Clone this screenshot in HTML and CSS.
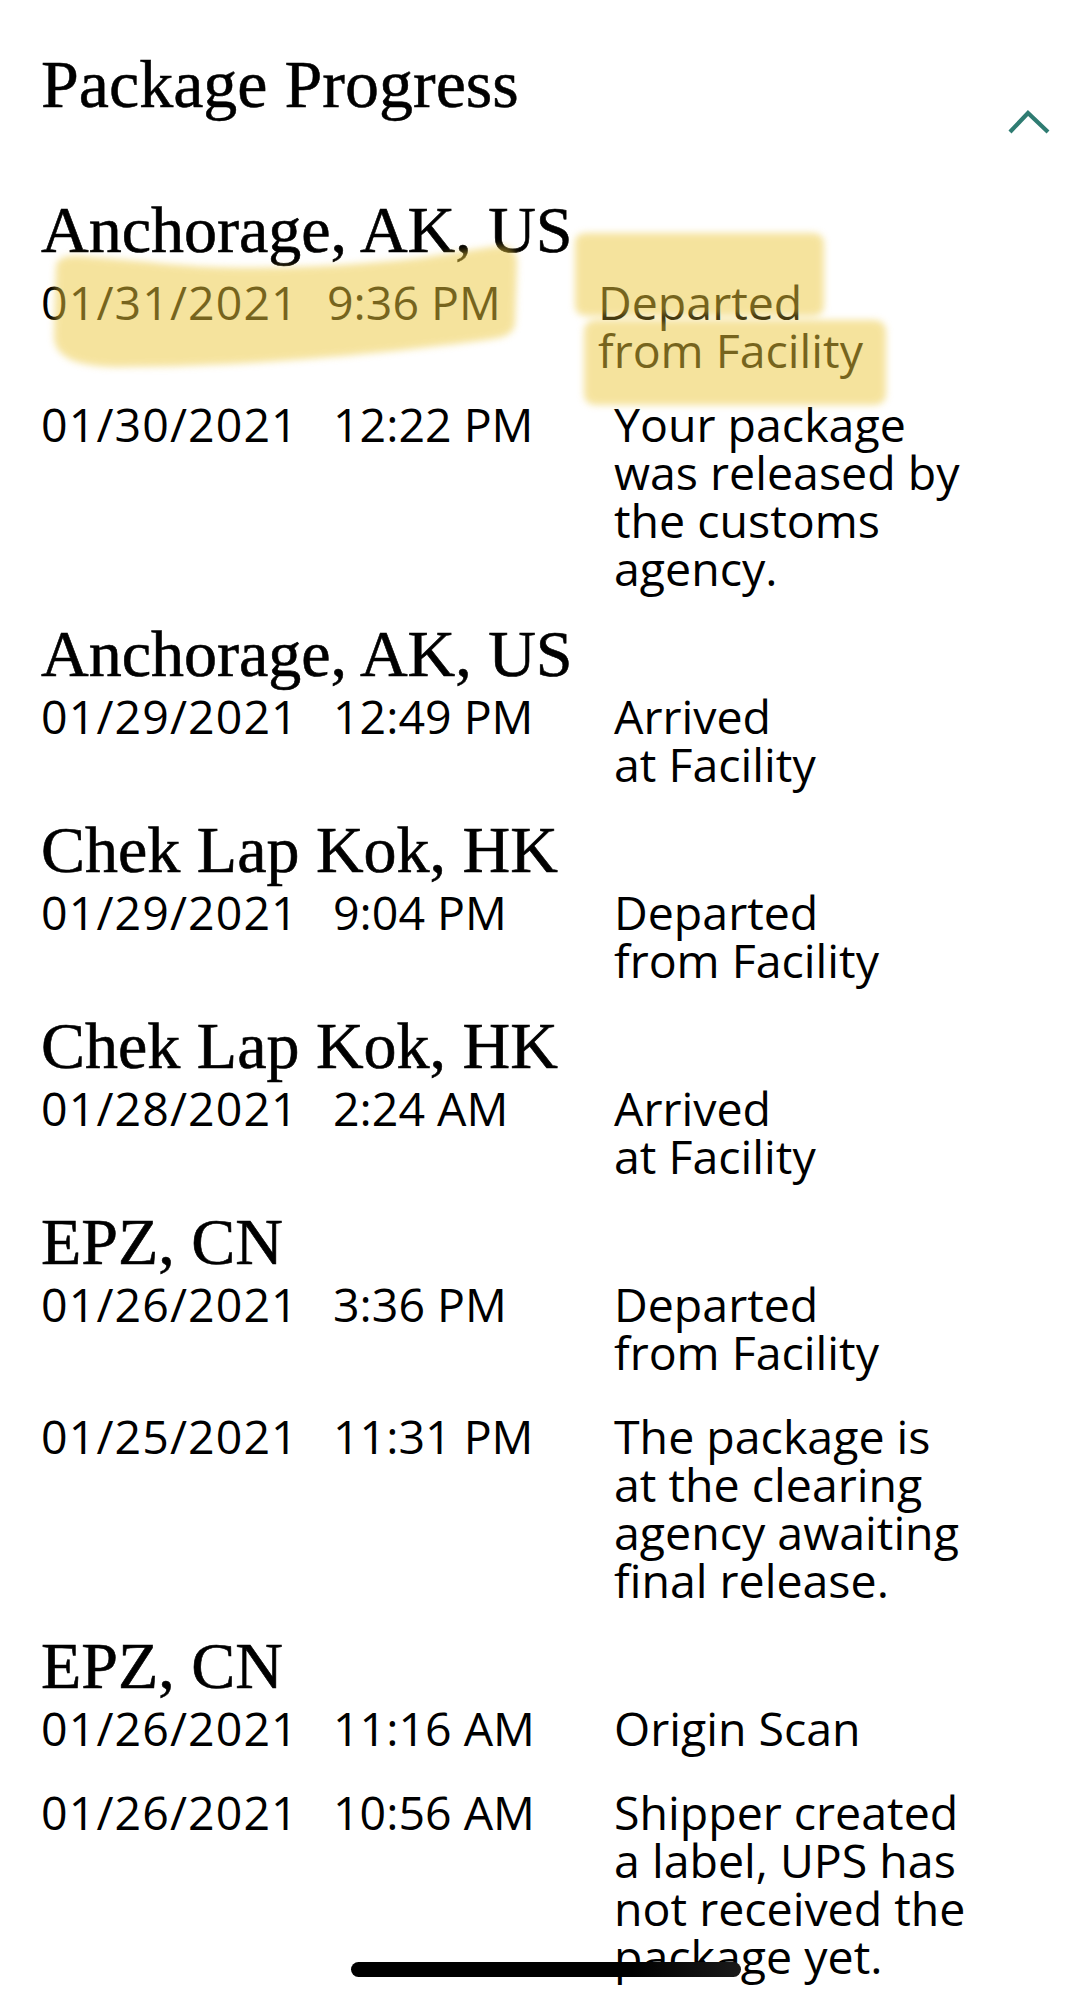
FILE: index.html
```html
<!DOCTYPE html>
<html lang="en">
<head>
<meta charset="utf-8">
<title>Package Progress</title>
<link rel="stylesheet" href="styles.css">
</head>
<body>
<main class="page">
  <header class="head">
    <h1 class="title">Package Progress</h1>
    <button class="toggle" aria-label="Collapse">
      <svg class="chevron" width="46" height="28" viewBox="0 0 46 28"><polyline points="4,24 22,5 42,24" fill="none" stroke="#2f7c72" stroke-width="4.2" stroke-linecap="butt" stroke-linejoin="miter"/></svg>
    </button>
  </header>

  <section class="progress">
    <div class="group">
      <h2 class="loc">Anchorage, AK, US</h2>
      <div class="events">
        <div class="event event-first">
          <span class="date">01/31/2021</span><span class="time">9:36 PM</span><span class="desc">Departed<br>from Facility</span>
        </div>
        <div class="event">
          <span class="date">01/30/2021</span><span class="time">12:22 PM</span><span class="desc">Your package<br>was released by<br>the customs<br>agency.</span>
        </div>
      </div>
    </div>

    <div class="group">
      <h2 class="loc">Anchorage, AK, US</h2>
      <div class="events">
        <div class="event">
          <span class="date">01/29/2021</span><span class="time">12:49 PM</span><span class="desc">Arrived<br>at Facility</span>
        </div>
      </div>
    </div>

    <div class="group">
      <h2 class="loc">Chek Lap Kok, HK</h2>
      <div class="events">
        <div class="event">
          <span class="date">01/29/2021</span><span class="time">9:04 PM</span><span class="desc">Departed<br>from Facility</span>
        </div>
      </div>
    </div>

    <div class="group">
      <h2 class="loc">Chek Lap Kok, HK</h2>
      <div class="events">
        <div class="event">
          <span class="date">01/28/2021</span><span class="time">2:24 AM</span><span class="desc">Arrived<br>at Facility</span>
        </div>
      </div>
    </div>

    <div class="group">
      <h2 class="loc">EPZ, CN</h2>
      <div class="events">
        <div class="event">
          <span class="date">01/26/2021</span><span class="time">3:36 PM</span><span class="desc">Departed<br>from Facility</span>
        </div>
        <div class="event">
          <span class="date">01/25/2021</span><span class="time">11:31 PM</span><span class="desc">The package is<br>at the clearing<br>agency awaiting<br>final release.</span>
        </div>
      </div>
    </div>

    <div class="group">
      <h2 class="loc">EPZ, CN</h2>
      <div class="events">
        <div class="event">
          <span class="date">01/26/2021</span><span class="time">11:16 AM</span><span class="desc">Origin Scan</span>
        </div>
        <div class="event">
          <span class="date">01/26/2021</span><span class="time">10:56 AM</span><span class="desc">Shipper created<br>a label, UPS has<br>not received the<br>package yet.</span>
        </div>
      </div>
    </div>
  </section>

  <svg class="marker" width="1090" height="420" viewBox="0 0 1090 420" aria-hidden="true">
    <defs>
      <filter id="soft" x="-10%" y="-20%" width="120%" height="140%">
        <feGaussianBlur stdDeviation="3.5"/>
      </filter>
    </defs>
    <g fill="rgb(236,200,62)" opacity="0.5" filter="url(#soft)">
      <path d="M56 268 C56 259 64 255 80 256 L150 262 C230 272 330 268 420 258 L498 246 C510 245 517 251 517 262 L515 322 C515 332 507 337 492 339 C400 352 250 367 120 367 C76 367 54 357 54 336 Z"/>
      <path d="M575 242 C575 236 580 233 588 233 L812 233 C820 233 824 237 824 244 L824 306 C824 312 820 316 812 316 L588 316 C580 316 575 312 575 306 Z"/>
      <path d="M584 332 C584 324 589 320 597 320 L873 320 C881 320 886 324 886 332 L886 394 C886 401 881 405 873 405 L597 405 C589 405 584 401 584 394 Z"/>
    </g>
  </svg>

  <div class="home-indicator"></div>
</main>
</body>
</html>
```

FILE: styles.css
```css
* {
  box-sizing: border-box;
}

html,
body {
  margin: 0;
  padding: 0;
  background: #ffffff;
}

.page {
  position: relative;
  width: 1090px;
  height: 2000px;
  overflow: hidden;
  background: #ffffff;
  color: #000000;
}

.head {
  display: flex;
  justify-content: space-between;
  align-items: flex-start;
  padding: 46px 38px 0 41px;
}

.title {
  margin: 0;
  font-family: "Liberation Serif", "Times New Roman", serif;
  font-weight: 400;
  font-size: 68px;
  line-height: 76px;
  color: #000000;
  -webkit-text-stroke: 0.5px #000000;
}

.toggle {
  margin: 62px 0 0 0;
  padding: 0;
  border: 0;
  background: none;
  line-height: 0;
  font-size: 0;
}

.chevron {
  display: block;
}

.progress {
  display: flex;
  flex-direction: column;
  gap: 26px;
  margin-top: 58px;
  padding-left: 41px;
}

.loc {
  margin: 0;
  font-family: "Liberation Serif", "Times New Roman", serif;
  font-weight: 400;
  font-size: 66px;
  line-height: 72px;
  color: #000000;
  -webkit-text-stroke: 0.6px #000000;
}

.events {
  display: flex;
  flex-direction: column;
  gap: 36px;
  margin-top: 2px;
}

.event {
  display: grid;
  grid-template-columns: 292px 281px 1fr;
  justify-items: start;
  font-family: "Open Sans", Lato, sans-serif;
  font-weight: 370;
  font-size: 46.5px;
  line-height: 48px;
  color: #000000;
}

.event-first {
  grid-template-columns: 286px 271px 1fr;
  margin-top: 10px;
  margin-bottom: -10px;
}

.date {
  letter-spacing: 1.1px;
}

.desc {
  white-space: nowrap;
}

.marker {
  position: absolute;
  left: 0;
  top: 0;
  pointer-events: none;
}

.home-indicator {
  position: absolute;
  left: 351px;
  top: 1962px;
  width: 390px;
  height: 15px;
  border-radius: 8px;
  background: linear-gradient(to right, #000000 0%, #000000 72%, #1a1a1a 100%);
}
```
